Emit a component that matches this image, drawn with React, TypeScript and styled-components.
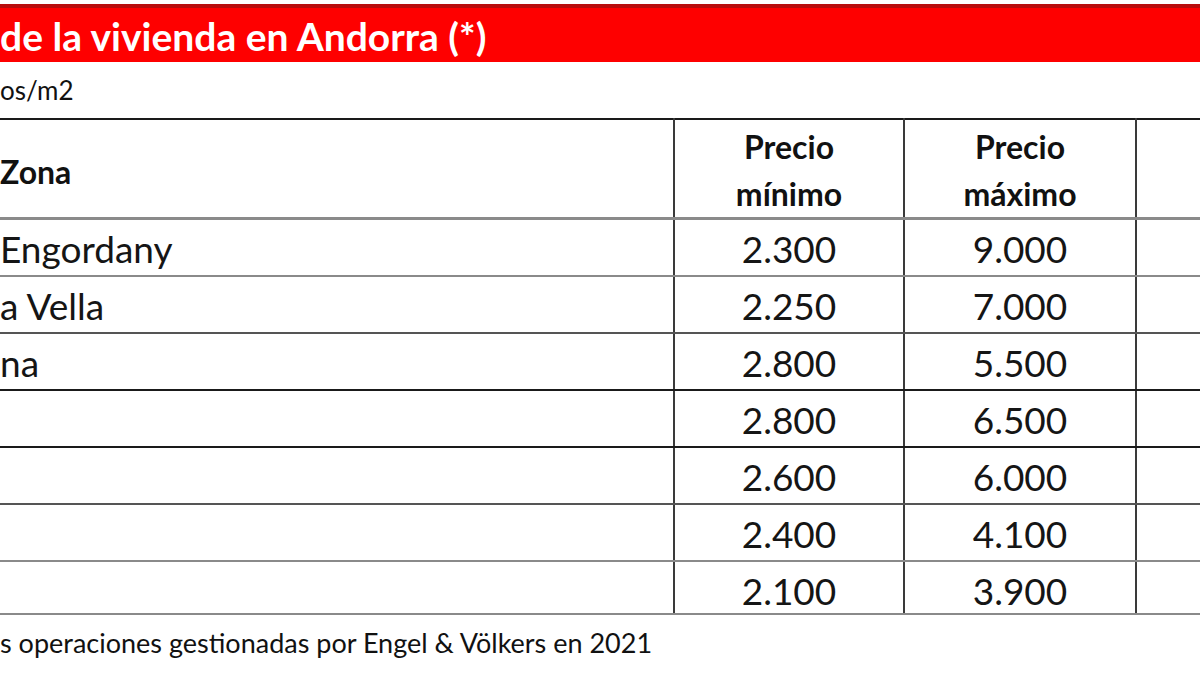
import React from "react";
import styled, { createGlobalStyle } from "styled-components";

const Global = createGlobalStyle`
  html, body { margin: 0; padding: 0; background: #ffffff; }
  body { width: 1200px; height: 675px; overflow: hidden; }
`;

const Page = styled.div`
  width: 1200px;
  height: 675px;
  overflow: hidden;
  background: #fff;
  font-family: Lato, "Noto Sans", sans-serif;
  color: #111;
`;

const Banner = styled.div`
  box-sizing: border-box;
  margin-top: 4px;
  height: 58px;
  border-top: 4px solid #b80c0c;
  background: #fe0000;
  padding-top: 9px;
`;

const Title = styled.h1`
  margin: 0;
  font-size: 39px;
  font-weight: 700;
  color: #fff;
  white-space: nowrap;
  line-height: 1;
`;

const Unit = styled.div`
  box-sizing: border-box;
  height: 56px;
  padding-top: 15px;
  font-size: 26px;
  line-height: 1;
`;

const Table = styled.table`
  border-collapse: collapse;
  width: 1240px;
  table-layout: fixed;
  border-top: 2px solid #1a1a1a;
`;

const Col = styled.col<{ $w: number }>`
  width: ${(p) => p.$w}px;
`;

const HeadCell = styled.th<{ $left?: boolean }>`
  box-sizing: border-box;
  height: 99px;
  padding: ${(p) => (p.$left ? "6px 0 0 0" : "3px 0 0 0")};
  font-size: 32px;
  font-weight: 700;
  line-height: 47px;
  text-align: ${(p) => (p.$left ? "left" : "center")};
  border-left: ${(p) => (p.$left ? "none" : "2px solid #3a3a3a")};
  border-bottom: 3px solid #8a8a8a;
  vertical-align: ${(p) => (p.$left ? "middle" : "top")};
  color: #111;
`;

const Row = styled.tr<{ $line: string }>`
  & > td {
    border-bottom: 2px solid ${(p) => p.$line};
  }
  &:last-child > td {
    height: 41px;
  }
`;

const Cell = styled.td<{ $left?: boolean }>`
  height: 45px;
  padding: 10px 0 0 0;
  font-size: 37px;
  line-height: 1;
  vertical-align: top;
  text-align: ${(p) => (p.$left ? "left" : "center")};
  border-left: ${(p) => (p.$left ? "none" : "2px solid #3a3a3a")};
  color: #151515;
  white-space: nowrap;
`;

const Note = styled.div`
  padding-top: 14px;
  font-size: 27px;
  line-height: 1;
  white-space: nowrap;
`;

const rows = [
  { zona: "Engordany", min: "2.300", max: "9.000", line: "#8a8a8a" },
  { zona: "a Vella", min: "2.250", max: "7.000", line: "#555" },
  { zona: "na", min: "2.800", max: "5.500", line: "#1a1a1a" },
  { zona: "", min: "2.800", max: "6.500", line: "#1a1a1a" },
  { zona: "", min: "2.600", max: "6.000", line: "#555" },
  { zona: "", min: "2.400", max: "4.100", line: "#8a8a8a" },
  { zona: "", min: "2.100", max: "3.900", line: "#8a8a8a" },
];

export default function App() {
  return (
    <Page>
      <Global />
      <Banner>
        <Title>de la vivienda en Andorra (*)</Title>
      </Banner>
      <Unit>os/m2</Unit>
      <Table>
        <colgroup>
          <Col $w={674} />
          <Col $w={230} />
          <Col $w={232} />
          <Col $w={104} />
        </colgroup>
        <thead>
          <tr>
            <HeadCell $left>Zona</HeadCell>
            <HeadCell>
              Precio
              <br />
              mínimo
            </HeadCell>
            <HeadCell>
              Precio
              <br />
              máximo
            </HeadCell>
            <HeadCell></HeadCell>
          </tr>
        </thead>
        <tbody>
          {rows.map((r, i) => (
            <Row key={i} $line={r.line}>
              <Cell $left>{r.zona}</Cell>
              <Cell>{r.min}</Cell>
              <Cell>{r.max}</Cell>
              <Cell></Cell>
            </Row>
          ))}
        </tbody>
      </Table>
      <Note>s operaciones gestionadas por Engel &amp; Völkers en 2021</Note>
    </Page>
  );
}
